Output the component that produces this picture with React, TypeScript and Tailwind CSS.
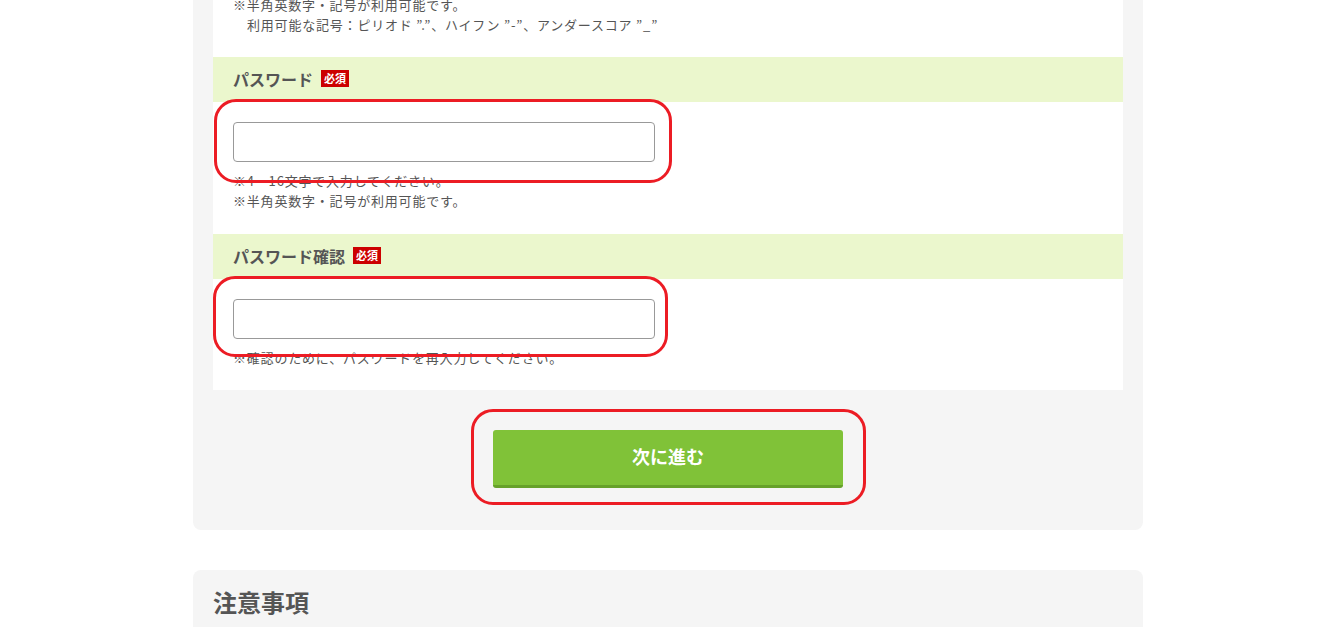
import React from 'react';

const jp = { fontFamily: '"Noto Sans CJK JP", "Noto Sans", sans-serif' };

const Badge = () => (
  <span className="ml-[8px] inline-flex h-[17px] items-center bg-[#cc0000] px-[3px] text-[11px] font-bold leading-none text-white">
    必須
  </span>
);

const SectionHead = ({ label }: { label: string }) => (
  <div className="flex h-[45px] items-center bg-[#ebf7cd] pb-[2px] pl-[20px]">
    <span className="text-[16px] font-bold text-[#555]">{label}</span>
    <Badge />
  </div>
);

export default function App() {
  return (
    <div className="min-h-[627px] overflow-hidden bg-white text-[#555]" style={jp}>
      <div className="ml-[193px] w-[950px]">
        {/* form card (scrolled, top is off screen) */}
        <div className="rounded-b-[8px] bg-[#f5f5f5] px-[20px] pb-[42px]">
          <div className="-mt-[5px] bg-white">
            <div className="px-[20px] pb-[22px] text-[13px] leading-[20px] tracking-[0.8px]">
              <p>※半角英数字・記号が利用可能です。</p>
              <p className="pl-[14px]">利用可能な記号：ピリオド ”.”、ハイフン ”-”、アンダースコア ”_”</p>
            </div>

            <SectionHead label="パスワード" />
            <div className="px-[20px] pb-[23px] pt-[20px]">
              <div className="relative w-[422px]">
                <input
                  type="password"
                  className="block h-[40px] w-full rounded-[4px] border border-[#999] bg-white px-[10px] outline-none"
                />
                <div className="pointer-events-none absolute -bottom-[21px] -left-[19px] -right-[17px] -top-[23px] rounded-[22px] border-[3px] border-[#ec1c24]" />
              </div>
              <div className="mt-[9px] text-[13px] leading-[20px] tracking-[0.8px]">
                <p>※4〜16文字で入力してください。</p>
                <p>※半角英数字・記号が利用可能です。</p>
              </div>
            </div>

            <SectionHead label="パスワード確認" />
            <div className="px-[20px] pb-[22px] pt-[20px]">
              <div className="relative w-[422px]">
                <input
                  type="password"
                  className="block h-[40px] w-full rounded-[4px] border border-[#999] bg-white px-[10px] outline-none"
                />
                <div className="pointer-events-none absolute -bottom-[18px] -left-[20px] -right-[13px] -top-[23px] rounded-[22px] border-[3px] border-[#ec1c24]" />
              </div>
              <p className="mt-[9px] text-[13px] leading-[20px] tracking-[0.8px]">※確認のために、パスワードを再入力してください。</p>
            </div>
          </div>

          <div className="flex justify-center pt-[40px]">
            <div className="relative">
              <button className="flex h-[58px] w-[350px] items-center justify-center rounded-[3px] border-b-[3px] border-[#66a12a] bg-[#80c238] pb-[2px] text-[18px] font-bold text-white">
                次に進む
              </button>
              <div className="pointer-events-none absolute -bottom-[17px] -left-[22px] -right-[23px] -top-[21px] rounded-[22px] border-[3px] border-[#ec1c24]" />
            </div>
          </div>
        </div>

        {/* notes card */}
        <div className="mt-[40px] h-[120px] rounded-t-[8px] bg-[#f5f5f5] px-[20px] pt-[16px]">
          <h2 className="text-[24px] font-bold leading-[32px] text-[#555]">注意事項</h2>
        </div>
      </div>
    </div>
  );
}
